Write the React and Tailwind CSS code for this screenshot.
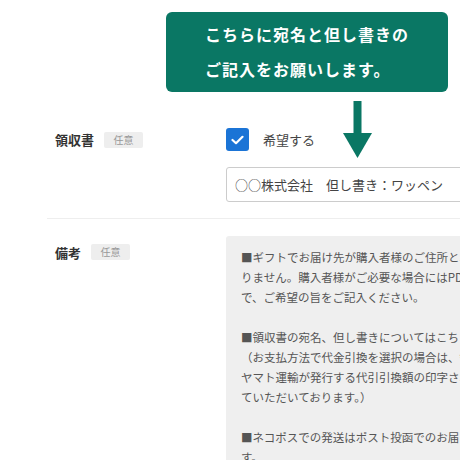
import React from "react";

const font = { fontFamily: '"Noto Sans CJK JP", "Noto Sans", sans-serif' };

function Badge() {
  return (
    <span className="inline-flex h-[16px] w-[39px] items-center justify-center rounded-[2px] bg-[#eeeeee] text-[10px] leading-none text-[#999999]">
      任意
    </span>
  );
}

const noteLines = [
  "■ギフトでお届け先が購入者様のご住所と異なる場合、領収書は同梱してお",
  "りません。購入者様がご必要な場合にはPDFでお送りいたしますの",
  "で、ご希望の旨をご記入ください。",
  "",
  "■領収書の宛名、但し書きについてはこちらにご記入ください。",
  "（お支払方法で代金引換を選択の場合は、領収書は",
  "ヤマト運輸が発行する代引引換額の印字されたものとさせ",
  "ていただいております。）",
  "",
  "■ネコポスでの発送はポスト投函でのお届けとなりま",
  "す。",
];

export default function App() {
  return (
    <div
      className="relative h-[460px] w-[460px] overflow-hidden bg-white text-[#333333]"
      style={font}
    >
      <div className="pl-[47px] pt-[128px]">
        {/* 領収書 row */}
        <div className="flex border-b border-[#eeeeee] pb-[16px]">
          <div className="flex h-[23px] w-[179px] shrink-0 items-center gap-[10px] pl-[8px]">
            <span className="text-[13px] font-bold leading-none text-[#333333]">領収書</span>
            <Badge />
          </div>
          <div className="flex min-w-0 flex-col gap-[16px]">
            <div className="flex h-[23px] items-center gap-[14px]">
              <span className="flex h-[23px] w-[23px] items-center justify-center rounded-[3px] bg-[#1b74d6]">
                <svg width="13" height="10" viewBox="0 0 13 10" fill="none">
                  <path d="M1.5 5 L5 8.2 L11.5 1.8" stroke="white" strokeWidth="2.2" strokeLinecap="round" strokeLinejoin="round" />
                </svg>
              </span>
              <span className="text-[13px] leading-none text-[#444444]">希望する</span>
            </div>
            <div className="flex h-[35px] w-[300px] items-center whitespace-nowrap rounded-[3px] border border-[#cccccc] pl-[8px] text-[13px] text-[#444444]">
              ○○株式会社　但し書き：ワッペン
            </div>
          </div>
        </div>
        {/* 備考 row */}
        <div className="flex pt-[17px]">
          <div className="flex h-[32px] w-[179px] shrink-0 items-center gap-[10px] pl-[8px]">
            <span className="text-[13px] font-bold leading-none text-[#333333]">備考</span>
            <Badge />
          </div>
          <div className="w-[320px] shrink-0 rounded-[3px] bg-[#efefef] pl-[15px] pt-[11px] pb-[20px] text-[11.5px] leading-[20px] text-[#555555]">
            {noteLines.map((l, i) => (
              <div key={i} className="h-[20px] whitespace-nowrap">
                {l}
              </div>
            ))}
          </div>
        </div>
      </div>

      {/* Callout overlay */}
      <div className="absolute left-[166px] top-[12px] h-[80px] w-[282px] rounded-[6px] bg-[#0a7764] pl-[39px] pt-[5px] text-[16px] font-bold leading-[35px] tracking-[1px] text-white">
        <div>こちらに宛名と但し書きの</div>
        <div>ご記入をお願いします。</div>
      </div>
      <svg
        className="absolute left-[343px] top-[101px]"
        width="30"
        height="58"
        viewBox="0 0 30 58"
      >
        <rect x="10.5" y="0" width="8" height="34" fill="#0a7764" />
        <polygon points="0,32 29,32 14.5,57" fill="#0a7764" />
      </svg>
    </div>
  );
}
